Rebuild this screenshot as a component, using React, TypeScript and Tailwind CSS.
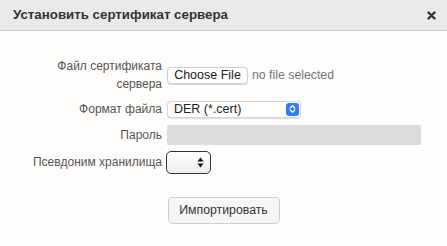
import React from "react";

export default function App() {
  return (
    <div className="w-[447px] h-[246px] bg-[#fffdfb] overflow-hidden" style={{ fontFamily: '"Liberation Sans", Arial, sans-serif' }}>
      <div className="h-[31px] bg-[#e9e9e9] border-b border-[#c8c8c8] flex items-center justify-between pl-[13px] pr-[11px]">
        <span className="text-[13.3px] font-bold text-[#333]">Установить сертификат сервера</span>
        <svg width="9" height="9" viewBox="0 0 9 9">
          <path d="M1.5 1.5 L7.5 7.5 M7.5 1.5 L1.5 7.5" stroke="#333" strokeWidth="2.4" strokeLinecap="round" />
        </svg>
      </div>
      <div className="pt-[26px] text-[12px] text-[#555]">
        <div className="flex items-center h-[36px]">
          <div className="w-[162px] text-right leading-[18px]">Файл сертификата<br />сервера</div>
          <div className="ml-[5px] flex items-center">
            <div className="h-[17px] w-[81px] bg-white border border-[#d0d0d0] rounded-[4px] flex items-center justify-center text-[#222] text-[12.5px] shadow-[0_0.5px_1px_rgba(0,0,0,0.15)]">Choose File</div>
            <span className="ml-[4px] text-[#777] text-[12.3px]">no file selected</span>
          </div>
        </div>
        <div className="flex items-center h-[24px] mt-[4px]">
          <div className="w-[162px] text-right">Формат файла</div>
          <div className="ml-[5px] h-[17px] w-[134px] bg-white border border-[#d6d6d6] rounded-[4px] flex items-center justify-between pl-[6px] pr-[1px] text-[#222] text-[12.5px] shadow-[0_0.5px_1px_rgba(0,0,0,0.12)]">
            <span>DER (*.cert)</span>
            <div className="w-[13px] h-[13px] rounded-[3px] bg-[#2f7cf6] flex items-center justify-center">
              <svg width="7" height="10" viewBox="0 0 7 10">
                <path d="M1.2 4 L3.5 1.8 L5.8 4 M1.2 6 L3.5 8.2 L5.8 6" stroke="white" strokeWidth="1.3" fill="none" strokeLinecap="round" strokeLinejoin="round" />
              </svg>
            </div>
          </div>
        </div>
        <div className="flex items-center h-[26px] mt-[1px]">
          <div className="w-[162px] text-right">Пароль</div>
          <div className="ml-[5px] h-[20px] w-[254px] bg-[#dcdcdc]"></div>
        </div>
        <div className="flex items-center h-[28px]">
          <div className="w-[162px] text-right">Псевдоним хранилища</div>
          <div className="ml-[4px] h-[23px] w-[45px] rounded-[5px] border-[1.5px] border-[#333] bg-gradient-to-b from-white to-[#ececec] flex items-center justify-end pr-[6px]">
            <svg width="7" height="11" viewBox="0 0 7 11">
              <path d="M0.5 4.5 L3.5 0.5 L6.5 4.5 Z M0.5 6.5 L3.5 10.5 L6.5 6.5 Z" fill="#111" />
            </svg>
          </div>
        </div>
        <div className="flex justify-center mt-[21px]">
          <div className="h-[27px] w-[112px] bg-[#f6f6f6] border border-[#cfcfcf] rounded-[4px] flex items-center justify-center text-[12.3px] text-[#333]">Импортировать</div>
        </div>
      </div>
    </div>
  );
}
